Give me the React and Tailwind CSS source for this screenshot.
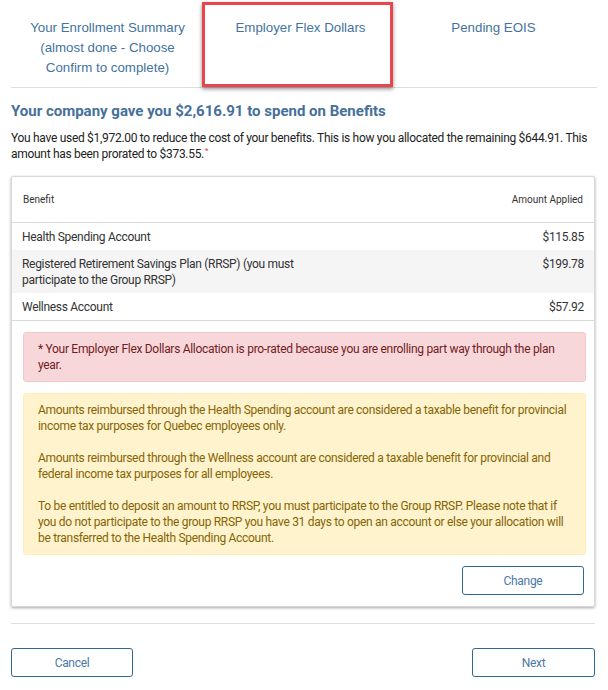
export default function App() {
  const rows = [
    { name: "Health Spending Account", amt: "$115.85", bg: "bg-white" },
    { name: "Registered Retirement Savings Plan (RRSP) (you must participate to the Group RRSP)", amt: "$199.78", bg: "bg-[#f5f5f5]" },
    { name: "Wellness Account", amt: "$57.92", bg: "bg-white" },
  ];
  return (
    <div className="w-[608px] h-[690px] bg-white pl-[11px] pr-[13px] font-['Roboto',sans-serif] text-[#333] overflow-hidden tracking-[-0.3px]">
      {/* Tabs */}
      <div className="flex h-[88px] -mr-[2px] border-b border-[#dedede] font-['Liberation_Sans',Arial,sans-serif] text-[13.3px] leading-[20px] text-[#4373a1] tracking-normal">
        <div className="w-[193px] pt-[18px] text-center">
          Your Enrollment Summary<br />(almost done - Choose<br />Confirm to complete)
        </div>
        <div className="relative w-[193px] pt-[18px] text-center">
          Employer Flex Dollars
          <div className="absolute left-[-2px] top-[2px] w-[191px] h-[85px] border-[3px] border-[#e9454b] shadow-[0_2px_4px_rgba(0,0,0,0.45)]"></div>
        </div>
        <div className="w-[193px] pt-[18px] text-center">Pending EOIS</div>
      </div>

      <h2 className="mt-[14px] text-[15px] leading-[18px] font-bold text-[#46709a] tracking-normal">
        Your company gave you $2,616.91 to spend on Benefits
      </h2>
      <p className="mt-[10px] text-[12px] leading-[16px] text-[#222]">
        You have used $1,972.00 to reduce the cost of your benefits. This is how you allocated the remaining $644.91. This amount has been prorated to $373.55.<span className="relative -top-[5px] ml-[1px] text-[#e0322f] text-[8px] leading-none">*</span>
      </p>

      {/* Card */}
      <div className="mt-[14px] border border-[#d8d8d8] rounded-[2px] shadow-[0_1px_3px_rgba(0,0,0,0.35)] pb-[11px]">
        <div className="flex justify-between items-center h-[46px] px-[11px] border-b border-[#d8d8d8] text-[10px] text-[#333] tracking-normal">
          <span>Benefit</span>
          <span>Amount Applied</span>
        </div>
        {rows.map((r, i) => (
          <div key={i} className={`flex justify-between items-start px-[10px] py-[5.5px] text-[12px] leading-[16px] text-[#333] ${r.bg}`}>
            <span className="w-[275px]">{r.name}</span>
            <span>{r.amt}</span>
          </div>
        ))}
        <div className="border-t border-[#d8d8d8]"></div>
        <div className="pl-[11px] pr-[8px] pt-[11px] flex flex-col gap-[11px]">
          <div className="bg-[#f8d7da] border border-[#f5c6cb] rounded-[3px] px-[14px] py-[8px] text-[12px] leading-[16px] text-[#721c24]">
            * Your Employer Flex Dollars Allocation is pro-rated because you are enrolling part way through the plan year.
          </div>
          <div className="bg-[#fff3cd] border border-[#ffeeba] rounded-[3px] px-[14px] py-[8px] text-[12px] leading-[16px] text-[#856404] flex flex-col gap-[16px]">
            <p>Amounts reimbursed through the Health Spending account are considered a taxable benefit for provincial income tax purposes for Quebec employees only.</p>
            <p>Amounts reimbursed through the Wellness account are considered a taxable benefit for provincial and federal income tax purposes for all employees.</p>
            <p>To be entitled to deposit an amount to RRSP, you must participate to the Group RRSP. Please note that if you do not participate to the group RRSP you have 31 days to open an account or else your allocation will be transferred to the Health Spending Account.</p>
          </div>
          <div className="flex justify-end pr-[2px]">
            <button className="w-[122px] h-[29px] border border-[#2f6892] rounded-[3px] text-[12px] text-[#4b79a6] bg-white">Change</button>
          </div>
        </div>
      </div>

      <div className="mt-[16px] border-t border-[#dedede]"></div>

      <div className="mt-[24px] flex justify-between">
        <button className="w-[122px] h-[29px] border border-[#2f6892] rounded-[3px] text-[12px] text-[#4b79a6] bg-white">Cancel</button>
        <button className="w-[123px] h-[29px] border border-[#2f6892] rounded-[3px] text-[12px] text-[#4b79a6] bg-white">Next</button>
      </div>
    </div>
  );
}
